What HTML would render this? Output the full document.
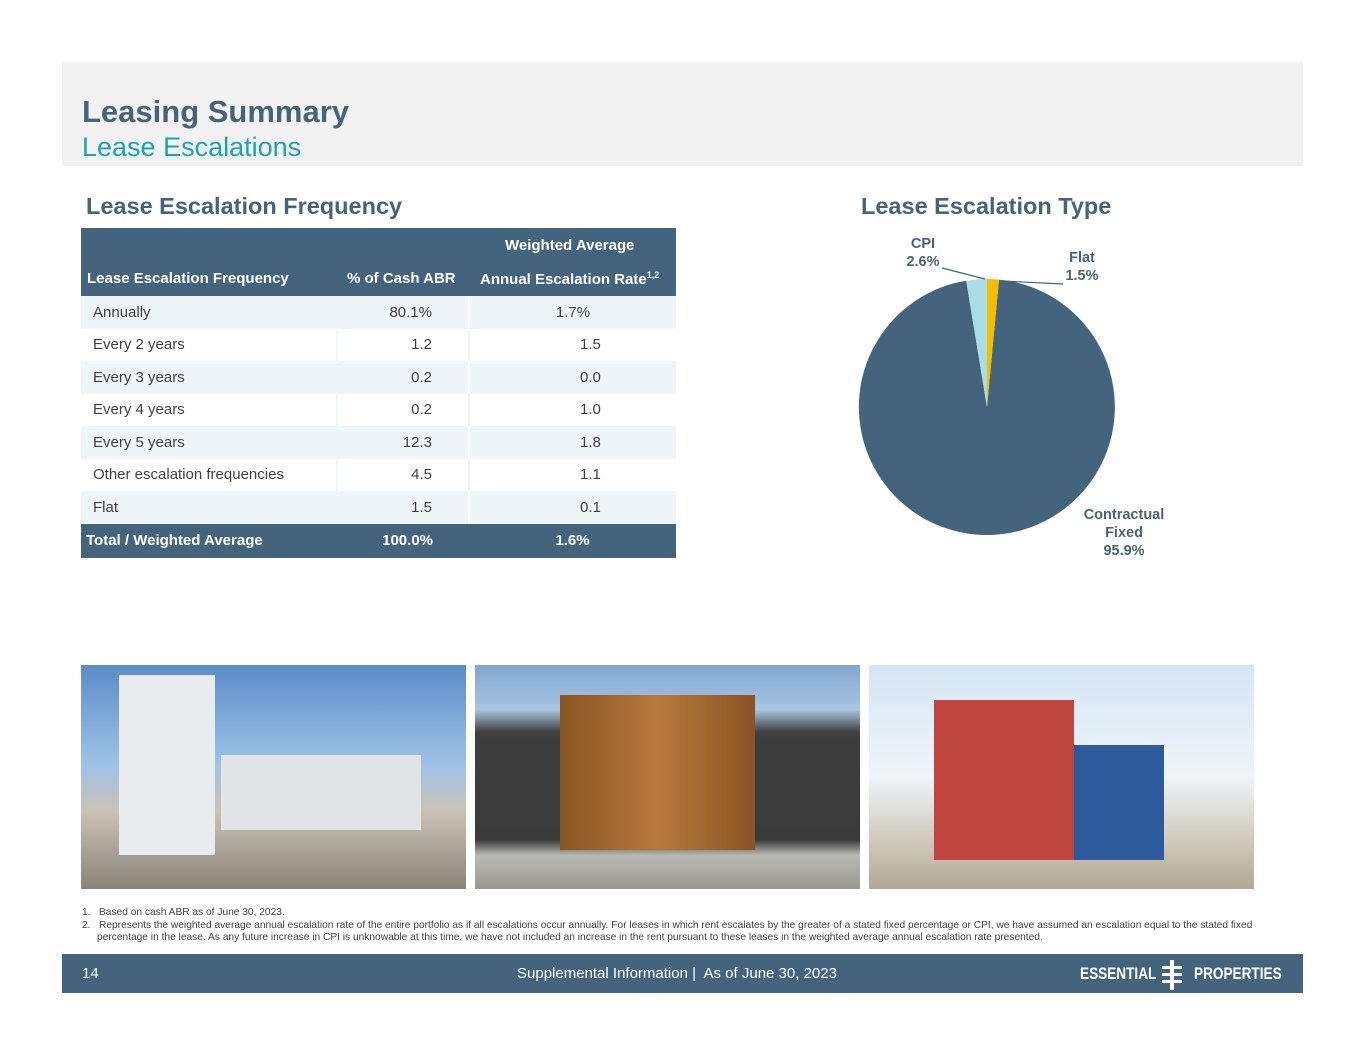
<!DOCTYPE html>
<html><head><style>
*{margin:0;padding:0;box-sizing:border-box}
body{width:1365px;height:1055px;background:#fff;font-family:"Liberation Sans",Arial,sans-serif;position:relative;overflow:hidden}
.abs{position:absolute}
table{border-collapse:collapse;width:595px;font-size:15px}
td{height:32.5px;color:#3f3f3f}
.num{text-align:right}
</style></head><body>
<div class="abs" style="left:62px;top:62px;width:1241px;height:104px;background:#f2f2f2"></div>
<div class="abs" style="left:82px;top:94px;font-size:31px;font-weight:bold;color:#44647d">Leasing Summary</div>
<div class="abs" style="left:82px;top:132px;font-size:27px;color:#1aa3b8">Lease Escalations</div>
<div class="abs" style="left:86px;top:193px;font-size:23.5px;font-weight:bold;color:#44647d">Lease Escalation Frequency</div>
<div class="abs" style="left:861px;top:193px;font-size:23.5px;font-weight:bold;color:#44647d">Lease Escalation Type</div>

<div class="abs" style="left:81px;top:228px;width:595px;height:68px;background:#44647d;color:#fff;font-weight:bold;font-size:15px">
 <div class="abs" style="left:424px;top:9px">Weighted Average</div>
 <div class="abs" style="left:6px;top:42px">Lease Escalation Frequency</div>
 <div class="abs" style="left:266px;top:42px">% of Cash ABR</div>
 <div class="abs" style="left:399px;top:42px">Annual Escalation Rate<sup style="font-size:9px">1,2</sup></div>
</div>
<table class="abs" style="left:81px;top:296px">
<colgroup><col style="width:256px"><col style="width:132px"><col></colgroup>
<tr style="background:#eef6f9"><td style="padding-left:12px">Annually</td><td class="num" style="padding-right:36px;border-right:2px solid #fff">80.1%</td><td style="text-align:center">1.7%</td></tr>
<tr><td style="padding-left:12px">Every 2 years</td><td class="num" style="padding-right:36px;border-left:2px solid #eef6f9;border-right:2px solid #eef6f9">1.2</td><td style="padding-left:110px">1.5</td></tr>
<tr style="background:#eef6f9"><td style="padding-left:12px">Every 3 years</td><td class="num" style="padding-right:36px;border-right:2px solid #fff">0.2</td><td style="padding-left:110px">0.0</td></tr>
<tr><td style="padding-left:12px">Every 4 years</td><td class="num" style="padding-right:36px;border-left:2px solid #eef6f9;border-right:2px solid #eef6f9">0.2</td><td style="padding-left:110px">1.0</td></tr>
<tr style="background:#eef6f9"><td style="padding-left:12px">Every 5 years</td><td class="num" style="padding-right:36px;border-right:2px solid #fff">12.3</td><td style="padding-left:110px">1.8</td></tr>
<tr><td style="padding-left:12px">Other escalation frequencies</td><td class="num" style="padding-right:36px;border-left:2px solid #eef6f9;border-right:2px solid #eef6f9">4.5</td><td style="padding-left:110px">1.1</td></tr>
<tr style="background:#eef6f9"><td style="padding-left:12px">Flat</td><td class="num" style="padding-right:36px;border-right:2px solid #fff">1.5</td><td style="padding-left:110px">0.1</td></tr>
<tr style="background:#44647d"><td style="padding-left:5px;color:#fff;font-weight:bold;height:34px">Total / Weighted Average</td><td class="num" style="padding-right:36px;color:#fff;font-weight:bold">100.0%</td><td style="text-align:center;color:#fff;font-weight:bold">1.6%</td></tr>
</table>

<svg class="abs" style="left:0;top:0" width="1365" height="600">
<path d="M987,407 L999,279.6 A128,128 0 1,1 966.2,280.7 Z" fill="#44647d"/>
<path d="M987,407 L966.2,280.7 A128,128 0 0,1 987,279 Z" fill="#a9dde6"/>
<path d="M987,407 L987,279 A128,128 0 0,1 999,279.6 Z" fill="#f5bd00"/>
<line x1="942" y1="268" x2="985" y2="279" stroke="#44647d" stroke-width="1.2"/>
<line x1="1002" y1="281" x2="1063" y2="284" stroke="#44647d" stroke-width="1.2"/>
<g font-weight="bold" font-size="14.5" fill="#44647d" text-anchor="middle">
<text x="923" y="248">CPI</text><text x="923" y="266">2.6%</text>
<text x="1082" y="262">Flat</text><text x="1082" y="280">1.5%</text>
<text x="1124" y="519">Contractual</text><text x="1124" y="537">Fixed</text><text x="1124" y="555">95.9%</text>
</g></svg>

<div class="abs" style="left:81px;top:665px;width:385px;height:224px;background:linear-gradient(#5a8cc8 0%,#9fc3e6 45%,#c9c2b5 65%,#8a8478 100%)">
 <div class="abs" style="left:38px;top:10px;width:96px;height:180px;background:#e8ecef"></div>
 <div class="abs" style="left:140px;top:90px;width:200px;height:75px;background:#e1e3e4"></div></div>
<div class="abs" style="left:475px;top:665px;width:385px;height:224px;background:linear-gradient(#7fa6cf 0%,#a9c5e0 20%,#3f3f3f 30%,#3a3a3a 78%,#b9b9b4 85%,#9a9890 100%)">
 <div class="abs" style="left:85px;top:30px;width:195px;height:155px;background:linear-gradient(90deg,#8a5424,#b87a3c,#8a5424)"></div></div>
<div class="abs" style="left:869px;top:665px;width:385px;height:224px;background:linear-gradient(#d5e6f4 0%,#eef4f9 50%,#cfc6b7 80%,#b2a896 100%)">
 <div class="abs" style="left:65px;top:35px;width:140px;height:160px;background:#c0453e"></div>
 <div class="abs" style="left:205px;top:80px;width:90px;height:115px;background:#2d5a9c"></div></div>

<div class="abs" style="left:82px;top:907px;font-size:10.2px;color:#404040;line-height:12.5px;width:1230px;white-space:nowrap">
<div>1.&nbsp;&nbsp;&nbsp;Based on cash ABR as of June 30, 2023.</div>
<div>2.&nbsp;&nbsp;&nbsp;Represents the weighted average annual escalation rate of the entire portfolio as if all escalations occur annually. For leases in which rent escalates by the greater of a stated fixed percentage or CPI, we have assumed an escalation equal to the stated fixed</div>
<div style="padding-left:15px">percentage in the lease. As any future increase in CPI is unknowable at this time, we have not included an increase in the rent pursuant to these leases in the weighted average annual escalation rate presented.</div>
</div>

<div class="abs" style="left:62px;top:954px;width:1241px;height:39px;background:#44647d;color:#fff">
 <div class="abs" style="left:20px;top:11px;font-size:15px">14</div>
 <div class="abs" style="left:455px;top:11px;font-size:15px">Supplemental Information |&nbsp; As of June 30, 2023</div>
 <div class="abs" style="left:1018px;top:10px;font-size:17px;font-weight:bold;transform:scaleX(0.8);transform-origin:left">ESSENTIAL</div>
 <svg class="abs" style="left:1098px;top:6px" width="24" height="30"><rect x="10" y="0" width="4" height="30" fill="#fff"/><rect x="2" y="6" width="20" height="3" fill="#fff"/><rect x="2" y="13" width="20" height="3" fill="#fff"/><rect x="2" y="20" width="20" height="3" fill="#fff"/></svg>
 <div class="abs" style="left:1132px;top:10px;font-size:17px;font-weight:bold;transform:scaleX(0.8);transform-origin:left">PROPERTIES</div>
</div>
</body></html>
